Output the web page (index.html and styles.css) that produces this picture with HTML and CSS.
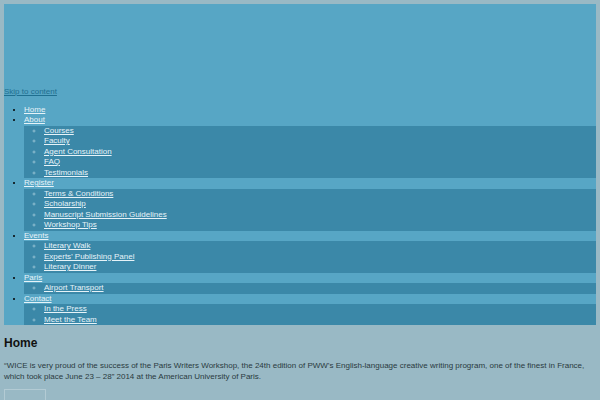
FILE: index.html
```html
<!DOCTYPE html>
<html>
<head>
<meta charset="utf-8">
<link rel="stylesheet" href="styles.css">
</head>
<body>
<div class="site-header">
  <div class="banner"></div>
  <a class="skip" href="#content">Skip to content</a>
  <ul class="menu">
    <li><a href="#">Home</a></li>
    <li><a href="#">About</a>
      <ul class="sub">
        <li><a href="#">Courses</a></li>
        <li><a href="#">Faculty</a></li>
        <li><a href="#">Agent Consultation</a></li>
        <li><a href="#">FAQ</a></li>
        <li><a href="#">Testimonials</a></li>
      </ul>
    </li>
    <li><a href="#">Register</a>
      <ul class="sub">
        <li><a href="#">Terms &amp; Conditions</a></li>
        <li><a href="#">Scholarship</a></li>
        <li><a href="#">Manuscript Submission Guidelines</a></li>
        <li><a href="#">Workshop Tips</a></li>
      </ul>
    </li>
    <li><a href="#">Events</a>
      <ul class="sub">
        <li><a href="#">Literary Walk</a></li>
        <li><a href="#">Experts’ Publishing Panel</a></li>
        <li><a href="#">Literary Dinner</a></li>
      </ul>
    </li>
    <li><a href="#">Paris</a>
      <ul class="sub">
        <li><a href="#">Airport Transport</a></li>
      </ul>
    </li>
    <li><a href="#">Contact</a>
      <ul class="sub">
        <li><a href="#">In the Press</a></li>
        <li><a href="#">Meet the Team</a></li>
      </ul>
    </li>
  </ul>
</div>
<div class="content" id="content">
  <h1 class="title">Home</h1>
  <p class="intro">“WICE is very proud of the success of the Paris Writers Workshop, the 24th edition of PWW’s English-language creative writing program, one of the finest in France, which took place June 23 – 28” 2014 at the American University of Paris.</p>
  <div class="box"></div>
</div>
</body>
</html>
```

FILE: styles.css
```css
html, body {
  margin: 0;
  padding: 0;
}
body {
  background: #99b9c5;
  padding: 4px;
  font-family: "Liberation Sans", Arial, sans-serif;
  font-size: 8px;
  line-height: 10.5px;
  color: #222;
  overflow: hidden;
  height: 392px;
}
.site-header {
  background: #57a6c5;
}
.banner {
  height: 83px;
}
.skip {
  display: block;
  color: #1f6f90;
}
.menu {
  list-style: disc;
  margin: 7px 0 0 0;
  padding: 0 0 0 20px;
  color: #000;
}
.menu a {
  color: #e6f3f8;
}
.sub {
  list-style: circle;
  margin: 0;
  padding: 0 0 0 20px;
  background: #3b88a8;
}
.sub li::marker {
  color: #8fbfd2;
}
.content {
  padding-top: 11px;
}
.title {
  margin: 0;
  font-size: 12px;
  line-height: 14px;
  font-weight: bold;
  color: #111;
}
.intro {
  margin: 11px 0 0 0;
  color: #2a3a40;
  line-height: 10.7px;
}
.box {
  margin-top: 7px;
  width: 40px;
  height: 14px;
  border: 1px solid #b3cbd4;
}
```
